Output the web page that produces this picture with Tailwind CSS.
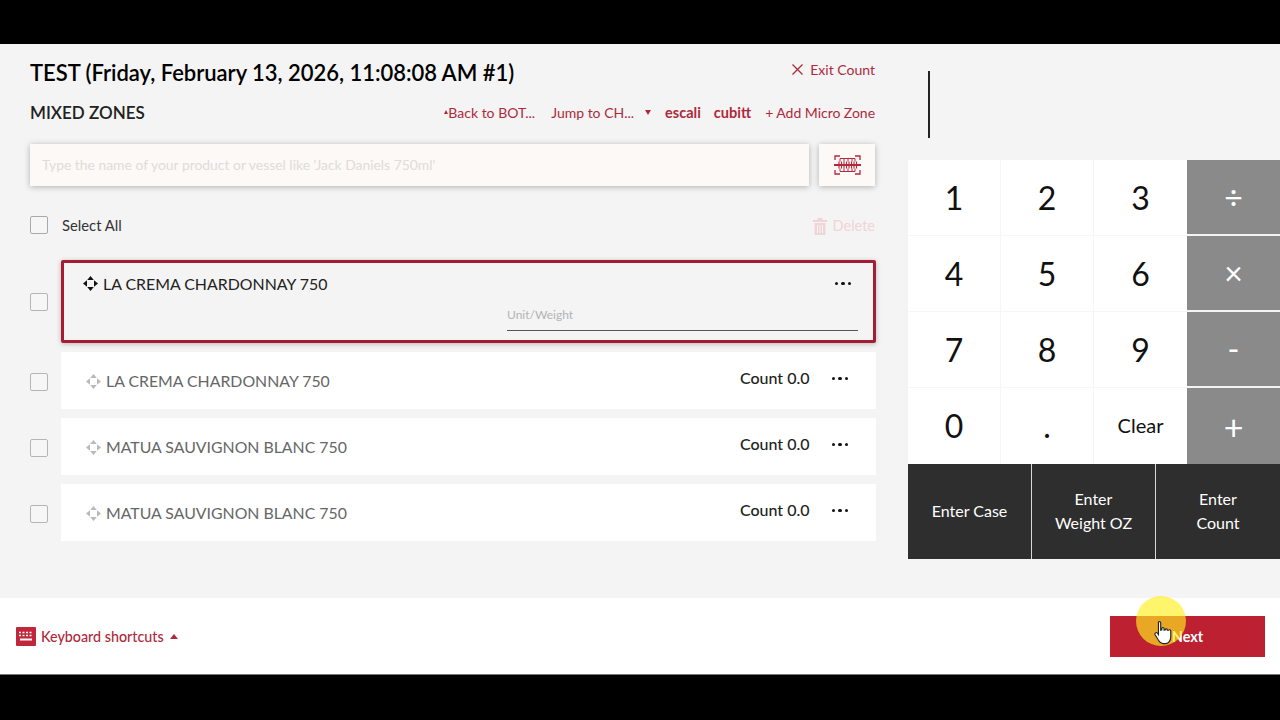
<!DOCTYPE html>
<html lang="en">
<head>
    <meta charset="UTF-8">
    <meta name="viewport" content="width=device-width, initial-scale=1.0">
    <title>Count</title>
    <script src="https://cdn.jsdelivr.net/npm/@tailwindcss/browser@4"></script>
</head>
<body class="bg-black font-['Lato','Liberation_Sans',sans-serif] overflow-hidden">
    <div class="w-[1280px] h-[720px] flex flex-col relative">
        <div class="h-[44px] bg-black"></div>

        <div class="h-[554px] flex bg-[#f4f4f4]">
            <!-- left side -->
            <div class="w-[908px] pl-[30px] pr-[32px]">
                <div class="h-[56px] flex justify-between pr-px">
                    <h1 class="text-[22px] leading-[58px] font-semibold text-black tracking-[-0.03px]">TEST (Friday, February 13, 2026, 11:08:08 AM #1)</h1>
                    <a class="flex items-center gap-[6px] h-[50px] text-[14px] text-[#ad2a3c]">
                        <svg class="w-[13px] h-[13px]" viewBox="0 0 13 13" fill="none" stroke="#ad2a3c" stroke-width="1.3"><path d="M1.5 1.5l10 10M11.5 1.5l-10 10"/></svg>
                        Exit Count
                    </a>
                </div>
                <div class="h-[26px] flex items-center justify-between pr-px">
                    <h2 class="text-[17px] font-semibold text-[#222]">MIXED ZONES</h2>
                    <div class="flex items-center text-[14px] text-[#ad2a3c] mb-[2px]">
                        <span class="w-0 h-0 border-x-[2.5px] border-x-transparent border-b-[4px] border-b-[#ad2a3c]"></span>
                        <span>Back to BOT...</span>
                        <span class="ml-[16px]">Jump to CH...</span>
                        <span class="ml-[11px] w-0 h-0 border-x-[3px] border-x-transparent border-t-[5px] border-t-[#ad2a3c]"></span>
                        <span class="ml-[14px] mt-[2px] font-bold text-[14.5px]">escali</span>
                        <span class="ml-[13px] mt-[2px] font-bold text-[14.5px]">cubitt</span>
                        <span class="ml-[14px] tracking-[-0.03px]">+ Add Micro Zone</span>
                    </div>
                </div>
                <div class="mt-[18px] flex gap-[10px]">
                    <div class="w-[779px] h-[42px] bg-[#fcf9f6] shadow-[0_1px_6px_rgba(0,0,0,0.28)] flex items-center pl-[12px] text-[13.9px] text-[#e0dcd8]">Type the name of your product or vessel like 'Jack Daniels 750ml'</div>
                    <div class="w-[56px] h-[42px] bg-[#fcf9f6] shadow-[0_1px_6px_rgba(0,0,0,0.28)] flex items-center justify-center">
                        <svg class="w-[27px] h-[20px]" viewBox="0 0 27 20" fill="none" stroke="#b5273a">
                            <path stroke-width="1.3" d="M1 5V1h5M21 1h5v4M1 15v4h5M26 15v4h-5"/>
                            <path stroke-width="1" d="M6 3.5h4v3M10 3.5h4v3M14 3.5h4v3M18 3.5h3v3M6 3.5v3M6 16.5h4v-3M10 16.5h4v-3M14 16.5h4v-3M18 16.5h3v-3M6 16.5v-3"/>
                            <path stroke-width="1.1" d="M5 6.5v7M7.5 6.5v7M10 6.5v7M12.5 6.5v7M15 6.5v7M17.5 6.5v7M20 6.5v7M22.5 6.5v7"/>
                            <path stroke-width="2" d="M0 10h27"/>
                        </svg>
                    </div>
                </div>
                <div class="mt-[30px] h-[18px] flex items-center justify-between pr-px">
                    <div class="flex items-center gap-[14px]">
                        <span class="w-[18px] h-[18px] rounded-[2px] border border-[#a9a9a9] bg-[#f6f6f6]"></span>
                        <span class="text-[14.8px] text-[#333]">Select All</span>
                    </div>
                    <div class="flex items-center gap-[6px] text-[14.5px] text-[#efd5d8] mt-[1px]">
                        <svg class="w-[14px] h-[18px]" viewBox="0 0 14 18" fill="#efd5d8"><path d="M0 3h4.5V1h5v2H14v2H0zM1.5 6h11v12h-11z"/><path d="M4.5 8v8M7 8v8M9.5 8v8" stroke="#f4f4f4" stroke-width="1"/></svg>
                        Delete
                    </div>
                </div>

                <!-- selected row -->
                <div class="mt-[26px] flex items-center">
                    <span class="w-[18px] h-[18px] rounded-[2px] border border-[#b5b5b5] bg-[#f6f6f6]"></span>
                    <div class="ml-[13px] w-[815px] h-[83px] border-[3px] border-[#a61c34] rounded-[2px] shadow-[0_1px_5px_rgba(0,0,0,0.25)] bg-[#f4f4f4] pl-[19px] pr-[15px] relative">
                        <div class="flex items-center h-[41px] text-[15.9px] text-[#222]">
                            <svg class="w-[15px] h-[15px] mr-[5px]" viewBox="0 0 15 15" fill="#111">
                                <path d="M7.5 0L10.8 4H4.2zM7.5 15L4.2 11H10.8zM0 7.5L4 4.2V10.8zM15 7.5L11 10.8V4.2z"/>
                            </svg>
                            LA CREMA CHARDONNAY 750
                            <span class="ml-auto mr-[7px] flex gap-[3px]">
                                <i class="w-[3.5px] h-[3.5px] rounded-full bg-[#111]"></i><i class="w-[3.5px] h-[3.5px] rounded-full bg-[#111]"></i><i class="w-[3.5px] h-[3.5px] rounded-full bg-[#111]"></i>
                            </span>
                        </div>
                        <div class="absolute left-[443px] right-[15px] top-[44px] h-[24px] border-b border-[#555] text-[12px] leading-[15px] text-[#b3b3b3]">Unit/Weight</div>
                    </div>
                </div>

                <!-- rows -->
                <div class="mt-[9px] flex flex-col gap-[9px]">
                    <div class="flex items-center">
                        <span class="w-[18px] h-[18px] rounded-[2px] border border-[#b5b5b5] bg-[#f6f6f6] mt-[3px]"></span>
                        <div class="ml-[13px] w-[815px] h-[57px] bg-white flex items-center pl-[25px] pr-[28px]">
                            <svg class="w-[15px] h-[15px] mr-[5px] mt-[1px]" viewBox="0 0 15 15" fill="#b9b9b9"><path d="M7.5 0L10.8 4H4.2zM7.5 15L4.2 11H10.8zM0 7.5L4 4.2V10.8zM15 7.5L11 10.8V4.2z"/></svg>
                            <span class="text-[15.85px] text-[#666]">LA CREMA CHARDONNAY 750</span>
                            <span class="ml-auto text-[16px] font-medium text-[#222] mb-[5px]">Count 0.0</span>
                            <span class="ml-[22px] flex gap-[3px] mb-[4px]"><i class="w-[3.5px] h-[3.5px] rounded-full bg-[#111]"></i><i class="w-[3.5px] h-[3.5px] rounded-full bg-[#111]"></i><i class="w-[3.5px] h-[3.5px] rounded-full bg-[#111]"></i></span>
                        </div>
                    </div>
                    <div class="flex items-center">
                        <span class="w-[18px] h-[18px] rounded-[2px] border border-[#b5b5b5] bg-[#f6f6f6] mt-[3px]"></span>
                        <div class="ml-[13px] w-[815px] h-[57px] bg-white flex items-center pl-[25px] pr-[28px]">
                            <svg class="w-[15px] h-[15px] mr-[5px] mt-[1px]" viewBox="0 0 15 15" fill="#b9b9b9"><path d="M7.5 0L10.8 4H4.2zM7.5 15L4.2 11H10.8zM0 7.5L4 4.2V10.8zM15 7.5L11 10.8V4.2z"/></svg>
                            <span class="text-[15.85px] text-[#666]">MATUA SAUVIGNON BLANC 750</span>
                            <span class="ml-auto text-[16px] font-medium text-[#222] mb-[5px]">Count 0.0</span>
                            <span class="ml-[22px] flex gap-[3px] mb-[4px]"><i class="w-[3.5px] h-[3.5px] rounded-full bg-[#111]"></i><i class="w-[3.5px] h-[3.5px] rounded-full bg-[#111]"></i><i class="w-[3.5px] h-[3.5px] rounded-full bg-[#111]"></i></span>
                        </div>
                    </div>
                    <div class="flex items-center">
                        <span class="w-[18px] h-[18px] rounded-[2px] border border-[#b5b5b5] bg-[#f6f6f6] mt-[3px]"></span>
                        <div class="ml-[13px] w-[815px] h-[57px] bg-white flex items-center pl-[25px] pr-[28px]">
                            <svg class="w-[15px] h-[15px] mr-[5px] mt-[1px]" viewBox="0 0 15 15" fill="#b9b9b9"><path d="M7.5 0L10.8 4H4.2zM7.5 15L4.2 11H10.8zM0 7.5L4 4.2V10.8zM15 7.5L11 10.8V4.2z"/></svg>
                            <span class="text-[15.85px] text-[#666]">MATUA SAUVIGNON BLANC 750</span>
                            <span class="ml-auto text-[16px] font-medium text-[#222] mb-[5px]">Count 0.0</span>
                            <span class="ml-[22px] flex gap-[3px] mb-[4px]"><i class="w-[3.5px] h-[3.5px] rounded-full bg-[#111]"></i><i class="w-[3.5px] h-[3.5px] rounded-full bg-[#111]"></i><i class="w-[3.5px] h-[3.5px] rounded-full bg-[#111]"></i></span>
                        </div>
                    </div>
                </div>
            </div>

            <!-- keypad -->
            <div class="w-[372px]">
                <div class="h-[116px] pl-[20px] pt-[27px]"><div class="w-[1.5px] h-[67px] bg-[#222]"></div></div>
                <div class="grid grid-cols-4 grid-rows-[repeat(4,76px)] bg-white text-[32px] text-[#111]">
                    <div class="flex items-center justify-center border-r border-b border-[#f6f6f6]">1</div>
                    <div class="flex items-center justify-center border-r border-b border-[#f6f6f6]">2</div>
                    <div class="flex items-center justify-center border-b border-[#f6f6f6]">3</div>
                    <div class="flex items-center justify-center bg-[#8a8a8a] border-b-2 border-[#f4f4f4] text-white">÷</div>
                    <div class="flex items-center justify-center border-r border-b border-[#f6f6f6]">4</div>
                    <div class="flex items-center justify-center border-r border-b border-[#f6f6f6]">5</div>
                    <div class="flex items-center justify-center border-b border-[#f6f6f6]">6</div>
                    <div class="flex items-center justify-center bg-[#8a8a8a] border-b-2 border-[#f4f4f4] text-white">×</div>
                    <div class="flex items-center justify-center border-r border-b border-[#f6f6f6]">7</div>
                    <div class="flex items-center justify-center border-r border-b border-[#f6f6f6]">8</div>
                    <div class="flex items-center justify-center border-b border-[#f6f6f6]">9</div>
                    <div class="flex items-center justify-center bg-[#8a8a8a] border-b-2 border-[#f4f4f4] text-white">-</div>
                    <div class="flex items-center justify-center border-r border-[#f6f6f6]">0</div>
                    <div class="flex items-center justify-center border-r border-[#f6f6f6]">.</div>
                    <div class="flex items-center justify-center text-[20px] pb-[3px]">Clear</div>
                    <div class="flex items-center justify-center bg-[#8a8a8a] text-white text-[34px]">+</div>
                </div>
                <div class="h-[95px] grid grid-cols-[123px_123px_124px] gap-px bg-[#d8d8d8] text-[16px] leading-[24px] text-white text-center">
                    <div class="bg-[#2e2e2e] flex items-center justify-center pb-[2px]">Enter Case</div>
                    <div class="bg-[#2e2e2e] flex items-center justify-center pb-[2px]">Enter<br>Weight OZ</div>
                    <div class="bg-[#2e2e2e] flex items-center justify-center pb-[2px]">Enter<br>Count</div>
                </div>
            </div>
        </div>

        <!-- footer -->
        <div class="h-[77px] bg-white flex items-center justify-between pl-[16px] pr-[15px] pt-px border-b border-[#777]">
            <div class="flex items-center text-[14.3px] font-medium text-[#ad2a3c]">
                <svg class="w-[20px] h-[19px] mr-[5px]" viewBox="0 0 20 19"><rect width="20" height="19" rx="1" fill="#c0273b"/><path d="M3 5.5h2M6.5 5.5h2M10 5.5h2M13.5 5.5h2M3 8.5h2M6.5 8.5h2M10 8.5h2M13.5 8.5h2" stroke="#fff" stroke-width="1.6" fill="none"/><path d="M4 12.5h12" stroke="#fff" stroke-width="2"/></svg>
                Keyboard shortcuts
                <span class="ml-[6px] w-0 h-0 border-x-[4px] border-x-transparent border-b-[5px] border-b-[#ad2a3c]"></span>
            </div>
            <button class="w-[155px] h-[41px] bg-[#bd2031] text-white text-[14.5px] font-bold flex items-center justify-center">Next</button>
        </div>

        <!-- cursor highlight from the recording -->
        <div class="absolute left-[1136px] top-[596px] w-[50px] h-[50px] rounded-full bg-[#fff01e]/65"></div>
        <svg class="absolute left-[1154px] top-[620px] w-[19px] h-[25px]" viewBox="0 0 17 22">
            <path d="M4 1.5c1-.6 2 0 2 1V9l1-.3V7.5c0-1.3 2-1.3 2 0v1.3l1-.1c0-1.3 2-1.2 2 .2l1 .1c.6-.9 2-.4 2 .7V15c0 3-2 6-5 6H8c-2 0-3-1.5-4-3L1 13c-.7-1.4 1-2.6 2-1.5L4 13V2.5z" fill="#fff" stroke="#222" stroke-width="1"/>
        </svg>
    </div>
</body>
</html>
